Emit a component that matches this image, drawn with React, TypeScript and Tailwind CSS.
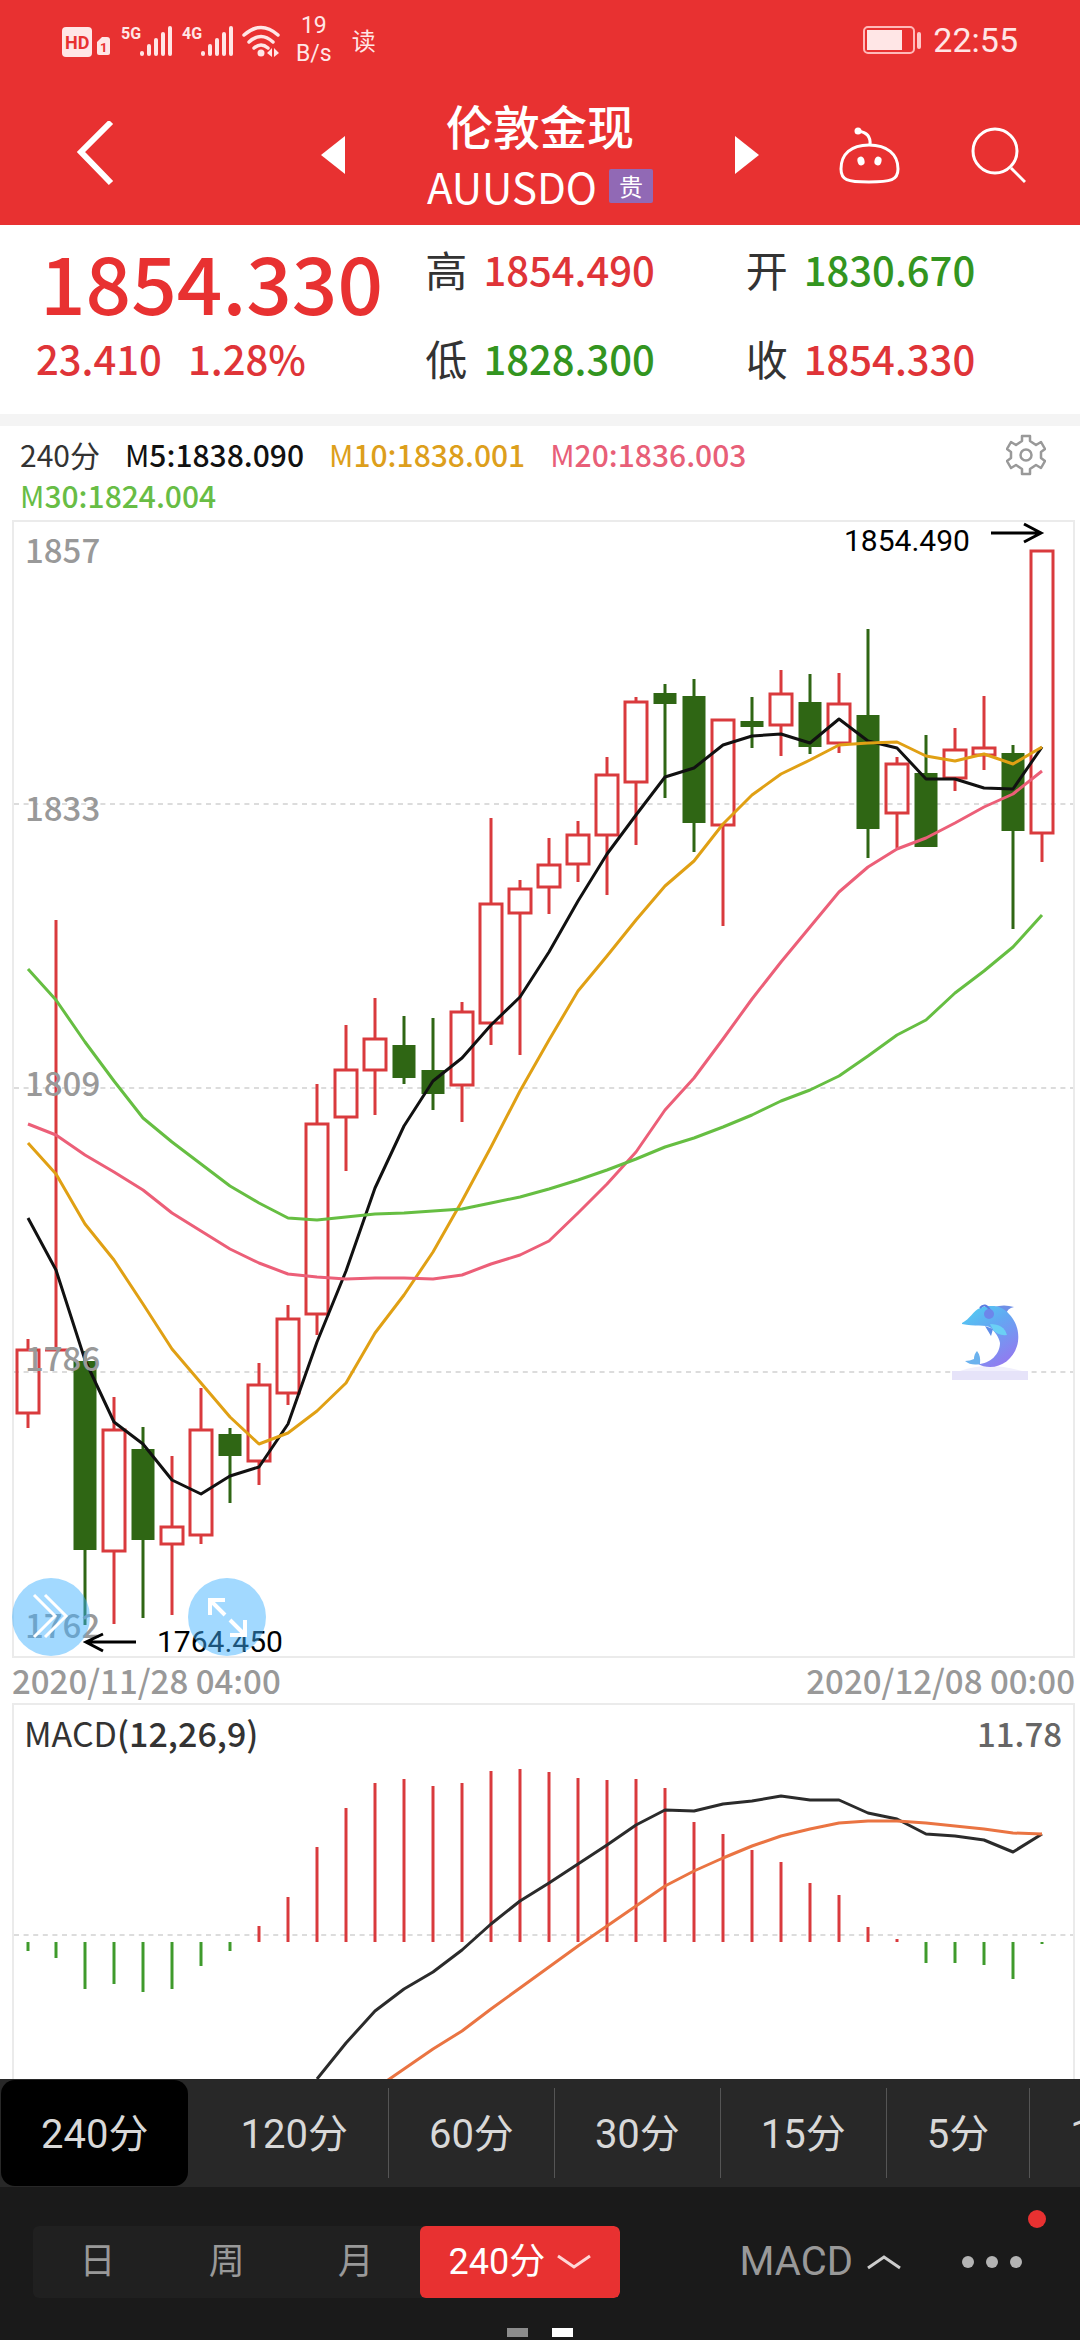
import { useState } from 'react'
import clsx from 'clsx'

// [direction, high, body top, body bottom, low]
type Candle = ['up' | 'down', number, number, number, number]

const candles: Candle[] = [
  ['up', 819, 830, 893, 908],
  ['up', 400, 830, 830, 830],
  ['down', 831, 841, 1030, 1105],
  ['up', 877, 910, 1031, 1104],
  ['down', 907, 929, 1020, 1098],
  ['up', 936, 1007, 1024, 1095],
  ['up', 868, 910, 1015, 1024],
  ['down', 908, 914, 936, 983],
  ['up', 843, 865, 941, 965],
  ['up', 785, 799, 873, 885],
  ['up', 564, 604, 794, 815],
  ['up', 505, 550, 597, 651],
  ['up', 478, 519, 550, 595],
  ['down', 496, 525, 558, 564],
  ['down', 498, 550, 574, 590],
  ['up', 482, 492, 565, 602],
  ['up', 298, 384, 503, 525],
  ['up', 360, 369, 393, 535],
  ['up', 318, 345, 367, 394],
  ['up', 301, 315, 344, 362],
  ['up', 237, 255, 315, 375],
  ['up', 177, 182, 262, 325],
  ['down', 164, 173, 184, 278],
  ['down', 159, 176, 303, 332],
  ['up', 200, 200, 305, 406],
  ['down', 177, 201, 207, 228],
  ['up', 150, 174, 205, 236],
  ['down', 154, 182, 227, 234],
  ['up', 153, 184, 223, 233],
  ['down', 109, 195, 309, 338],
  ['up', 237, 244, 293, 328],
  ['down', 215, 253, 327, 327],
  ['up', 208, 230, 258, 271],
  ['up', 176, 228, 235, 250],
  ['down', 225, 233, 311, 409],
  ['up', 31, 31, 313, 342],
]

const averages = [
  {
    id: '5',
    value: '1838.090',
    text: 'text-[#111111]',
    stroke: '#111111',
    points: [698, 750, 840, 902, 924, 960, 974, 956, 947, 904, 822, 751, 668, 606, 561, 538, 505, 477, 432, 381, 334, 295, 257, 248, 225, 216, 214, 223, 199, 221, 228, 259, 259, 268, 269, 227],
  },
  {
    id: '10',
    value: '1838.001',
    text: 'text-[#dd9f1c]',
    stroke: '#e0a014',
    points: [623, 654, 704, 740, 784, 829, 863, 897, 924, 913, 891, 863, 813, 775, 732, 681, 627, 571, 520, 471, 436, 400, 366, 341, 304, 275, 254, 240, 225, 223, 222, 236, 241, 234, 244, 227],
  },
  {
    id: '20',
    value: '1836.003',
    text: 'text-[#e85f78]',
    stroke: '#ec5f78',
    points: [604, 615, 635, 652, 670, 693, 711, 729, 743, 754, 757, 759, 758, 758, 759, 755, 744, 735, 721, 693, 664, 632, 590, 558, 519, 479, 442, 407, 372, 347, 329, 318, 303, 287, 274, 251],
  },
  {
    id: '30',
    value: '1824.004',
    text: 'text-[#68bd45]',
    stroke: '#66be42',
    points: [449, 480, 522, 561, 598, 622, 644, 666, 683, 698, 700, 697, 694, 693, 691, 689, 683, 677, 669, 660, 650, 639, 627, 618, 607, 595, 581, 570, 556, 536, 515, 500, 473, 451, 427, 395],
  },
]

const macdBars = [248, 255, 286, 281, 289, 286, 263, 248, 223, 194, 144, 105, 80, 76, 83, 80, 68, 66, 69, 75, 77, 76, 85, 119, 131, 147, 159, 180, 192, 224, 236, 260, 260, 262, 276, 241]
const dif = [376, 340, 308, 286, 269, 247, 221, 198, 180, 161, 142, 122, 107, 108, 101, 98, 93, 97, 97, 110, 116, 131, 133, 137, 149, 131]
const dea = [386, 366, 346, 328, 306, 285, 264, 243, 223, 203, 183, 168, 155, 143, 133, 126, 120, 118, 118, 120, 123, 126, 130, 131]

const axisLabels = [
  { text: '1857', y: 43 },
  { text: '1833', y: 301 },
  { text: '1809', y: 576 },
  { text: '1786', y: 851 },
  { text: '1762', y: 1118 },
]

const minutes = ['240分', '120分', '60分', '30分', '15分', '5分', '1分']
const periods = ['日', '周', '月']

const UP = '#d93a3d'
const DOWN = '#2f6614'

const slotX = (i: number) => (i < 2 ? 16 + 28 * i : 15 + 29 * i)
const toPoints = (ys: number[], start = 0) => ys.map((y, i) => `${slotX(i + start)},${y}`).join(' ')

function StatusBar() {
  return (
    <div className="flex items-center justify-between pt-3 pr-[62px] pl-[62px] text-[#ffe6e6]">
      <div className="flex items-center">
        <svg width="220" height="36" viewBox="0 0 220 36" fill="currentColor" aria-hidden="true">
          <rect x="0" y="5" width="30" height="30" rx="4" />
          <text x="3" y="27" fontSize="18" fontWeight="700" fill="#e83131" fontFamily="Roboto, sans-serif">HD</text>
          <path d="M35 20l5-5h5q3 0 3 3v13q0 2-2 2h-9q-2 0-2-2z" />
          <text x="38" y="30" fontSize="13" fontWeight="700" fill="#e83131" fontFamily="Roboto, sans-serif">1</text>
          {[61, 122].map((x, n) => (
            <g key={x}>
              <text x={x - 2} y="17" fontSize="16" fontWeight="700" fontFamily="Roboto, sans-serif">{n === 0 ? '5G' : '4G'}</text>
              <rect x={x + 17} y="29" width="4" height="5" rx="2" />
              <rect x={x + 24} y="22" width="4" height="12" rx="2" />
              <rect x={x + 31} y="16" width="4" height="18" rx="2" />
              <rect x={x + 38} y="10" width="4" height="24" rx="2" />
              <rect x={x + 45} y="4" width="4" height="30" rx="2" />
            </g>
          ))}
          <g fill="none" stroke="currentColor" strokeWidth="3.5" strokeLinecap="round">
            <path d="M182 13q17-15 34 0" />
            <path d="M187 20q12-11 24 0" />
            <path d="M192 26q7-6 14 0" />
          </g>
          <circle cx="199" cy="31" r="3.5" />
          <path d="M205 31l5-5v9zM212 26l5 5-5 4z" />
        </svg>
        <div className="ml-[14px] text-center font-[Roboto,sans-serif] text-[23px] leading-7">
          <div>19</div>
          <div>B/s</div>
        </div>
        <span className="ml-5 text-2xl">读</span>
      </div>
      <div className="flex items-center gap-[11px]">
        <svg width="59" height="28" viewBox="0 0 59 28" aria-hidden="true">
          <rect x="1" y="1" width="50" height="26" rx="4" fill="none" stroke="#ffb9b9" strokeWidth="2" />
          <rect x="4" y="4" width="35" height="20" fill="#ffe6e6" />
          <rect x="54" y="6" width="4" height="17" rx="2" fill="#ffc8c8" />
        </svg>
        <span className="font-[Roboto,sans-serif] text-[34px] leading-10">22:55</span>
      </div>
    </div>
  )
}

function TitleBar() {
  return (
    <div className="grid grid-cols-[1fr_auto_1fr] items-center pt-[26px] pr-[54px] pb-[9px] pl-[76px] text-white">
      <button type="button" aria-label="返回" className="justify-self-start">
        <svg width="38" height="68" viewBox="0 0 38 68" fill="none" stroke="currentColor" strokeWidth="6">
          <path d="M35 1L5 31l30 31" />
        </svg>
      </button>
      <div className="flex items-center gap-[82px] pr-[22px]">
        <button type="button" aria-label="上一个">
          <svg width="24" height="38" viewBox="0 0 24 38" fill="currentColor"><path d="M24 0v38L0 19z" /></svg>
        </button>
        <div className="text-center">
          <h1 className="text-[47px] leading-[62px] font-medium">伦敦金现</h1>
          <div className="flex items-center justify-center gap-3">
            <span className="text-[42px] leading-[60px]">AUUSDO</span>
            <span className="rounded-xs bg-[#9169b5] px-[10px] text-2xl leading-[34px]">贵</span>
          </div>
        </div>
        <button type="button" aria-label="下一个">
          <svg width="24" height="38" viewBox="0 0 24 38" fill="currentColor"><path d="M0 0v38l24-19z" /></svg>
        </button>
      </div>
      <div className="flex items-center gap-[71px] justify-self-end">
        <button type="button" aria-label="智能助手">
          <svg width="61" height="58" viewBox="0 0 61 58" fill="none" stroke="currentColor" strokeWidth="3">
            <path d="M30 19C48 19 59 28 59 43C59 54 52 56 30 56S2 54 2 43C2 28 12 19 30 19z" />
            <path d="M31 19C32 10 27 6 19 5" />
            <circle cx="19" cy="5" r="3.5" fill="currentColor" stroke="none" />
            <ellipse cx="22" cy="35" rx="3.5" ry="4.5" fill="currentColor" stroke="none" transform="rotate(-15 22 35)" />
            <ellipse cx="39" cy="35" rx="3.5" ry="4.5" fill="currentColor" stroke="none" transform="rotate(15 39 35)" />
          </svg>
        </button>
        <button type="button" aria-label="搜索">
          <svg width="55" height="58" viewBox="0 0 55 58" fill="none" stroke="currentColor" strokeWidth="3">
            <circle cx="24" cy="25" r="22" />
            <path d="M40 42l14 14" />
          </svg>
        </button>
      </div>
    </div>
  )
}

function Quote({ label, value, rise }: { label: string; value: string; rise: boolean }) {
  return (
    <div className="flex items-center gap-4">
      <dt className="text-[42px] leading-[60px] font-normal text-[#333333]">{label}</dt>
      <dd className={clsx('text-[40px] leading-[60px] font-medium', rise ? 'text-[#df3438]' : 'text-[#33951f]')}>{value}</dd>
    </div>
  )
}

function QuotePanel() {
  return (
    <section className="grid grid-cols-[389fr_320fr_334fr] border-b-12 border-[#f4f4f4] pt-[14px] pb-[25px] pl-9 font-medium">
      <div className="text-[#df3438]">
        <div className="pl-1 text-[80px] leading-[82px] text-[#e83131]">1854.330</div>
        <div className="flex gap-[26px] pt-[6px] text-[40px] leading-[62px]">
          <span>23.410</span>
          <span>1.28%</span>
        </div>
      </div>
      <dl className="flex flex-col gap-[29px]">
        <Quote label="高" value="1854.490" rise />
        <Quote label="低" value="1828.300" rise={false} />
      </dl>
      <dl className="flex flex-col gap-[29px]">
        <Quote label="开" value="1830.670" rise={false} />
        <Quote label="收" value="1854.330" rise />
      </dl>
    </section>
  )
}

function Legend() {
  return (
    <div className="flex items-start justify-between pt-2 pr-[34px] pb-1 pl-5">
      <div className="flex flex-1 flex-wrap gap-x-[25px] pr-[100px] text-[30px] leading-[41px] font-medium">
        <span className="font-normal text-[#333333]">240分</span>
        {averages.map(({ id, value, text }) => (
          <span key={id} className={text}>
            <span className="font-normal">M</span>{id}:{value}
          </span>
        ))}
      </div>
      <button type="button" aria-label="指标设置">
        <svg width="40" height="42" viewBox="0 0 40 42" fill="none" stroke="#999999" strokeWidth="2.5" strokeLinejoin="round">
          <path d="M16 2h8v5l6 4 5-3 4 7-4 3v6l4 3-4 7-5-3-6 4v5h-8v-5l-6-4-5 3-4-7 4-3v-6l-4-3 4-7 5 3 6-4z" />
          <circle cx="20" cy="21" r="5.5" />
        </svg>
      </button>
    </div>
  )
}

function Dolphin() {
  return (
    <svg x="940" y="782" width="76" height="80" viewBox="0 0 76 80">
      <defs>
        <linearGradient id="dolphin" x1="0" y1="0" x2="0.6" y2="1">
          <stop offset="0" stopColor="#4fd3f2" />
          <stop offset="0.45" stopColor="#62a9f2" />
          <stop offset="1" stopColor="#8f7df0" />
        </linearGradient>
      </defs>
      <path d="M8 69Q36 59 70 69z" fill="#f0effc" />
      <rect x="0" y="69" width="76" height="9" fill="#e6e3f9" />
      <path d="M42 5Q52 2 62 5Q55 6 54 13z" fill="#6f8fe6" />
      <path d="M10 21C18 17 21 9 28 6C41 2 50 4 57 12C66 21 68 34 65 44C61 57 50 65 38 65Q31 65 26 62C38 62 48 52 48 41C47 35 43 30 39 26C34 22 22 25 10 22z" fill="url(#dolphin)" />
      <path d="M38 22Q52 22 55 33Q46 34 41 28z" fill="#6bd0f5" />
      <path d="M33 24l6 10 2-7z" fill="#5f8ce8" />
      <path d="M13 59q5 0 9-2 0-5 3-8 4 5 3 13-9 2-15-3z" fill="#6bb2ee" />
      <path d="M28 6q5-6 10 2" fill="none" stroke="#5b7be0" strokeWidth="2" />
      <circle cx="37" cy="12" r="5" fill="#6d86ea" />
    </svg>
  )
}

function PriceChart() {
  return (
    <div className="relative">
      <svg className="block h-auto w-full" viewBox="0 0 1063 1138" role="img" aria-label="K线图">
        <rect x="1" y="1" width="1061" height="1136" fill="#ffffff" stroke="#ebebeb" strokeWidth="2" />
        {[284, 568, 852].map((y) => (
          <path key={y} d={`M2 ${y}H1061`} stroke="#dcdcdc" strokeWidth="2" strokeDasharray="5 4.6" />
        ))}
        {candles.map(([dir, high, top, bottom, low], i) => {
          const x = slotX(i)
          return dir === 'up' ? (
            <g key={i} stroke={UP} strokeWidth="3" fill="none">
              <path d={`M${x} ${high}V${top}M${x} ${bottom}V${low}`} />
              {top === bottom ? <path d={`M${x - 11} ${top}h22`} /> : <rect x={x - 11} y={top} width="22" height={bottom - top} />}
            </g>
          ) : (
            <g key={i} fill={DOWN}>
              <rect x={x - 1.5} y={high} width="3" height={low - high} />
              <rect x={x - 11.5} y={top} width="23" height={bottom - top} />
            </g>
          )
        })}
        {averages.map(({ id, stroke, points }) => (
          <polyline key={id} points={toPoints(points)} fill="none" stroke={stroke} strokeWidth="3" strokeLinejoin="round" />
        ))}
        <g fill="#999999" fontSize="33" fontWeight="500">
          {axisLabels.map(({ text, y }) => (
            <text key={text} x="13" y={y}>{text}</text>
          ))}
        </g>
        <Dolphin />
        <g fill="none" stroke="#000000" strokeWidth="3">
          <path d="M979 13h50M1012 4l17 9-17 9" />
          <path d="M124 1122H74M91 1114l-17 8 17 9" />
        </g>
        <g fill="#000000" fontSize="30" fontFamily="Roboto, sans-serif">
          <text x="832" y="31">1854.490</text>
          <text x="145" y="1132">1764.450</text>
        </g>
      </svg>
      <div className="absolute bottom-[2px] left-0 flex gap-[98px]">
        <button type="button" aria-label="展开" className="size-[78px] rounded-full bg-[#3cb0ff]/48">
          <svg viewBox="0 0 78 78" fill="none" stroke="#ffffff" strokeWidth="3">
            <path d="M22 17l21 21-21 21M33 17l21 21-21 21" />
          </svg>
        </button>
        <button type="button" aria-label="全屏" className="size-[78px] rounded-full bg-[#3cb0ff]/48">
          <svg viewBox="0 0 78 78" fill="none" stroke="#ffffff" strokeWidth="4">
            <path d="M37 37L22 22M37 22H22v15M42 42l15 15M57 42v15H42" />
          </svg>
        </button>
      </div>
    </div>
  )
}

function MacdChart() {
  return (
    <svg className="block h-auto w-full" viewBox="0 0 1063 376" role="img" aria-label="MACD">
      <path d="M1 376V1H1062V376" fill="none" stroke="#ebebeb" strokeWidth="2" />
      <path d="M2 232H1061" stroke="#dcdcdc" strokeWidth="2" strokeDasharray="5 4.6" />
      {macdBars.map((y, i) => (
        <path key={i} d={`M${slotX(i)} 239V${y}`} stroke={y < 239 ? UP : '#3f9a2c'} strokeWidth="3" />
      ))}
      <g fill="none" strokeWidth="3" strokeLinejoin="round">
        <polyline points={toPoints(dif, 10)} stroke="#2b2b2b" />
        <polyline points={toPoints(dea, 12)} stroke="#ea7442" />
      </g>
      <text x="12" y="44" fontSize="34" fill="#333333">
        MACD<tspan fontWeight="500">(12,26,9)</tspan>
      </text>
      <text x="1050" y="44" fontSize="33" textAnchor="end" fill="#666666" fontWeight="500">11.78</text>
    </svg>
  )
}

export default function App() {
  const [minute, setMinute] = useState('240分')

  return (
    <main className="overflow-hidden bg-white font-['Noto_Sans_CJK_SC',sans-serif]">
      <header className="bg-[#e83131]">
        <StatusBar />
        <TitleBar />
      </header>

      <QuotePanel />
      <Legend />

      <section className="mr-[5px] ml-3">
        <PriceChart />
        <div className="flex justify-between text-[33px] leading-[45px] font-medium text-[#999999]">
          <time>2020/11/28 04:00</time>
          <time>2020/12/08 00:00</time>
        </div>
        <MacdChart />
      </section>

      <nav className="flex overflow-hidden bg-[#282828] px-px font-[Roboto,'Noto_Sans_CJK_SC',sans-serif] text-[40px] leading-10 text-[#d8d8d8]">
        {minutes.map((item) => (
          <button
            key={item}
            type="button"
            onClick={() => setMinute(item)}
            className={clsx(
              'shrink-0 px-10 whitespace-nowrap',
              item === minute
                ? 'my-px mr-3 rounded-[14px] bg-black pt-[35px] pb-[31px]'
                : 'my-[9px] border-r border-[#555555] pt-[27px] pb-[23px]'
            )}
          >
            {item}
          </button>
        ))}
      </nav>

      <footer className="bg-[#1a1a1a] pt-[39px] pb-[3px] font-[Roboto,'Noto_Sans_CJK_SC',sans-serif]">
        <div className="flex items-center pr-[58px] pl-[33px]">
          <div className="grid flex-1 grid-cols-[129fr_129fr_129fr_199fr] overflow-hidden rounded-md bg-[#202020] text-4xl leading-[72px] text-[#999999]">
            {periods.map((period) => (
              <button key={period} type="button">{period}</button>
            ))}
            <button type="button" className="flex items-center justify-center gap-3 rounded-md bg-[#e83131] text-white">
              {minute}
              <svg width="34" height="16" viewBox="0 0 34 16" fill="none" stroke="#ffd6d6" strokeWidth="3"><path d="M1 2l16 11L33 2" /></svg>
            </button>
          </div>
          <button type="button" className="ml-[120px] flex items-center gap-[14px] text-[40px] leading-[72px] text-[#999999]">
            MACD
            <svg width="34" height="16" viewBox="0 0 34 16" fill="none" stroke="#cccccc" strokeWidth="3"><path d="M1 14L17 3l16 11" /></svg>
          </button>
          <button type="button" aria-label="更多" className="relative ml-[61px] flex gap-3 py-[30px]">
            <span className="size-3 rounded-full bg-[#b4b4b4]" />
            <span className="size-3 rounded-full bg-[#b4b4b4]" />
            <span className="size-3 rounded-full bg-[#b4b4b4]" />
            <span className="absolute -top-4 -right-6 size-[18px] rounded-full bg-[#e83131]" />
          </button>
        </div>
        <div className="mt-[30px] flex justify-center gap-6">
          <span className="h-[9px] w-[21px] bg-[#8c8c8c]" />
          <span className="h-[9px] w-[21px] bg-white" />
        </div>
      </footer>
    </main>
  )
}
